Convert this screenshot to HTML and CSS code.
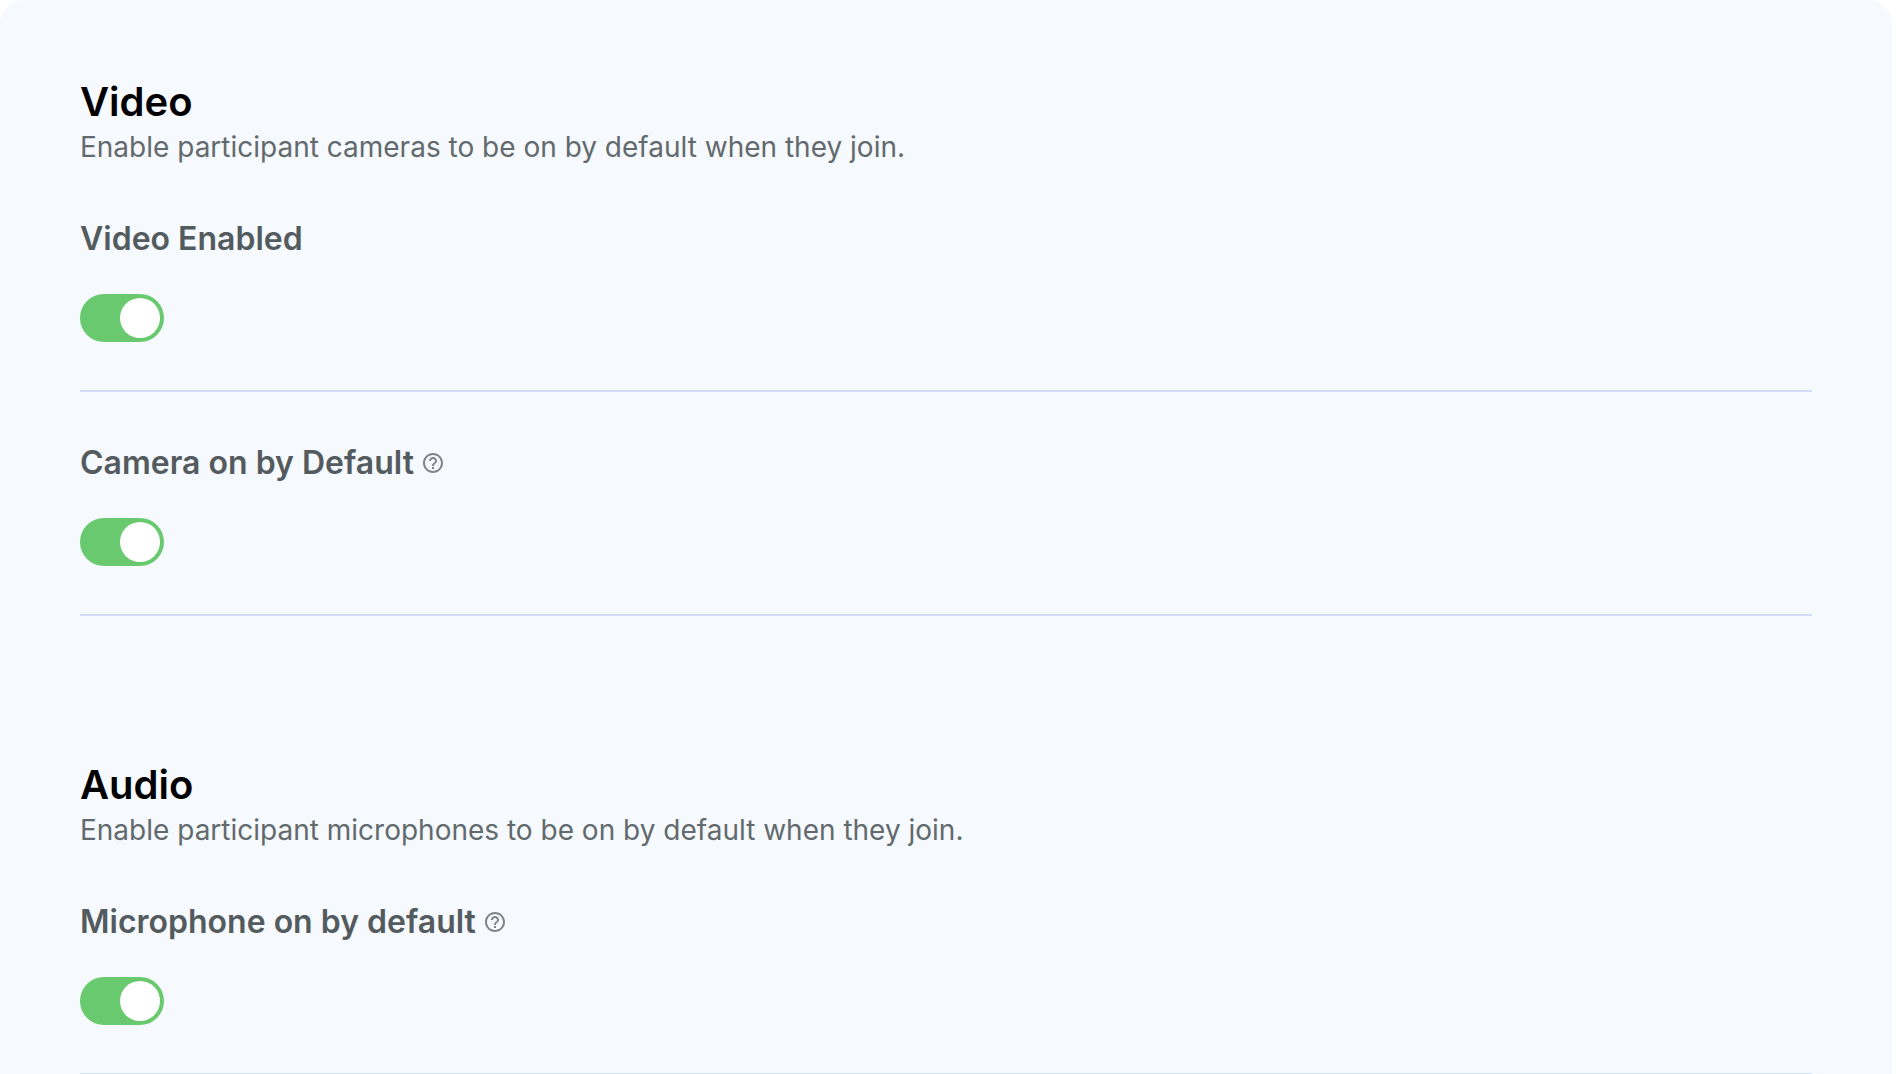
FILE: index.html
```html
<!DOCTYPE html>
<html lang="en">
<head>
<meta charset="utf-8">
<meta name="viewport" content="width=device-width, initial-scale=1">
<title>Room settings</title>
<link rel="stylesheet" href="styles.css">
</head>
<body>
<main class="panel">
  <section class="group">
    <h2 class="group-title">Video</h2>
    <p class="group-text">Enable participant cameras to be on by default when they join.</p>
    <div class="setting">
      <div class="setting-head"><label class="setting-label" for="video-enabled">Video Enabled</label></div>
      <input class="switch" type="checkbox" role="switch" id="video-enabled" checked>
    </div>
    <div class="setting">
      <div class="setting-head">
        <label class="setting-label" for="camera-default">Camera on by Default</label>
        <button class="help" type="button" aria-label="Help"><svg class="help-icon" viewBox="0 0 24 24" aria-hidden="true"><path d="M11 18h2v-2h-2v2zm1-16C6.48 2 2 6.48 2 12s4.480 10 10 10 10-4.480 10-10S17.520 2 12 2zm0 18c-4.410 0-8-3.590-8-8s3.590-8 8-8 8 3.590 8 8-3.590 8-8 8zm0-14c-2.210 0-4 1.790-4 4h2c0-1.100.9-2 2-2s2 .9 2 2c0 2-3 1.750-3 5h2c0-2.250 3-2.500 3-5 0-2.210-1.790-4-4-4z"/></svg></button>
      </div>
      <input class="switch" type="checkbox" role="switch" id="camera-default" checked>
    </div>
  </section>
  <section class="group">
    <h2 class="group-title">Audio</h2>
    <p class="group-text">Enable participant microphones to be on by default when they join.</p>
    <div class="setting">
      <div class="setting-head">
        <label class="setting-label" for="mic-default">Microphone on by default</label>
        <button class="help" type="button" aria-label="Help"><svg class="help-icon" viewBox="0 0 24 24" aria-hidden="true"><path d="M11 18h2v-2h-2v2zm1-16C6.48 2 2 6.48 2 12s4.480 10 10 10 10-4.480 10-10S17.520 2 12 2zm0 18c-4.410 0-8-3.590-8-8s3.590-8 8-8 8 3.590 8 8-3.590 8-8 8zm0-14c-2.210 0-4 1.790-4 4h2c0-1.100.9-2 2-2s2 .9 2 2c0 2-3 1.750-3 5h2c0-2.250 3-2.500 3-5 0-2.210-1.790-4-4-4z"/></svg></button>
      </div>
      <input class="switch" type="checkbox" role="switch" id="mic-default" checked>
    </div>
  </section>
</main>
</body>
</html>
```

FILE: styles.css
```css
* { box-sizing: border-box; }

body {
  margin: 0;
  background: #fff;
  font-family: Inter, "Liberation Sans", sans-serif;
}

.panel {
  display: flex;
  flex-direction: column;
  gap: 143px;
  min-height: 100vh;
  margin-right: 4px;
  padding: 76px 80px 0;
  border-radius: 24px 24px 0 0;
  background: #f6f9fe;
}

.group-title {
  margin: 0;
  color: #000;
  font-size: 40px;
  font-weight: 600;
  line-height: 52px;
}

.group-text {
  margin: 0 0 2px;
  color: #626a6d;
  font-size: 28px;
  line-height: 38px;
}

.setting {
  padding: 51px 0 48px;
  border-bottom: 2px solid #d0defa;
}

.setting-head {
  display: flex;
  align-items: center;
  gap: 7px;
  height: 40px;
  margin-bottom: 35px;
}

.setting-label {
  color: #535b5e;
  font-size: 32px;
  font-weight: 600;
  line-height: 40px;
}

.help {
  display: flex;
  padding: 0;
  border: 0;
  background: none;
  color: #7c838c;
}

.help-icon {
  width: 24px;
  height: 24px;
  fill: currentColor;
}

.switch {
  display: flex;
  align-items: center;
  width: 84px;
  height: 48px;
  margin: 0;
  padding: 4px;
  border-radius: 24px;
  appearance: none;
  background: #68c96e;
  cursor: pointer;
}

.switch::before {
  content: "";
  width: 40px;
  height: 40px;
  border-radius: 50%;
  background: #fff;
}

.switch:checked {
  justify-content: flex-end;
}
```
